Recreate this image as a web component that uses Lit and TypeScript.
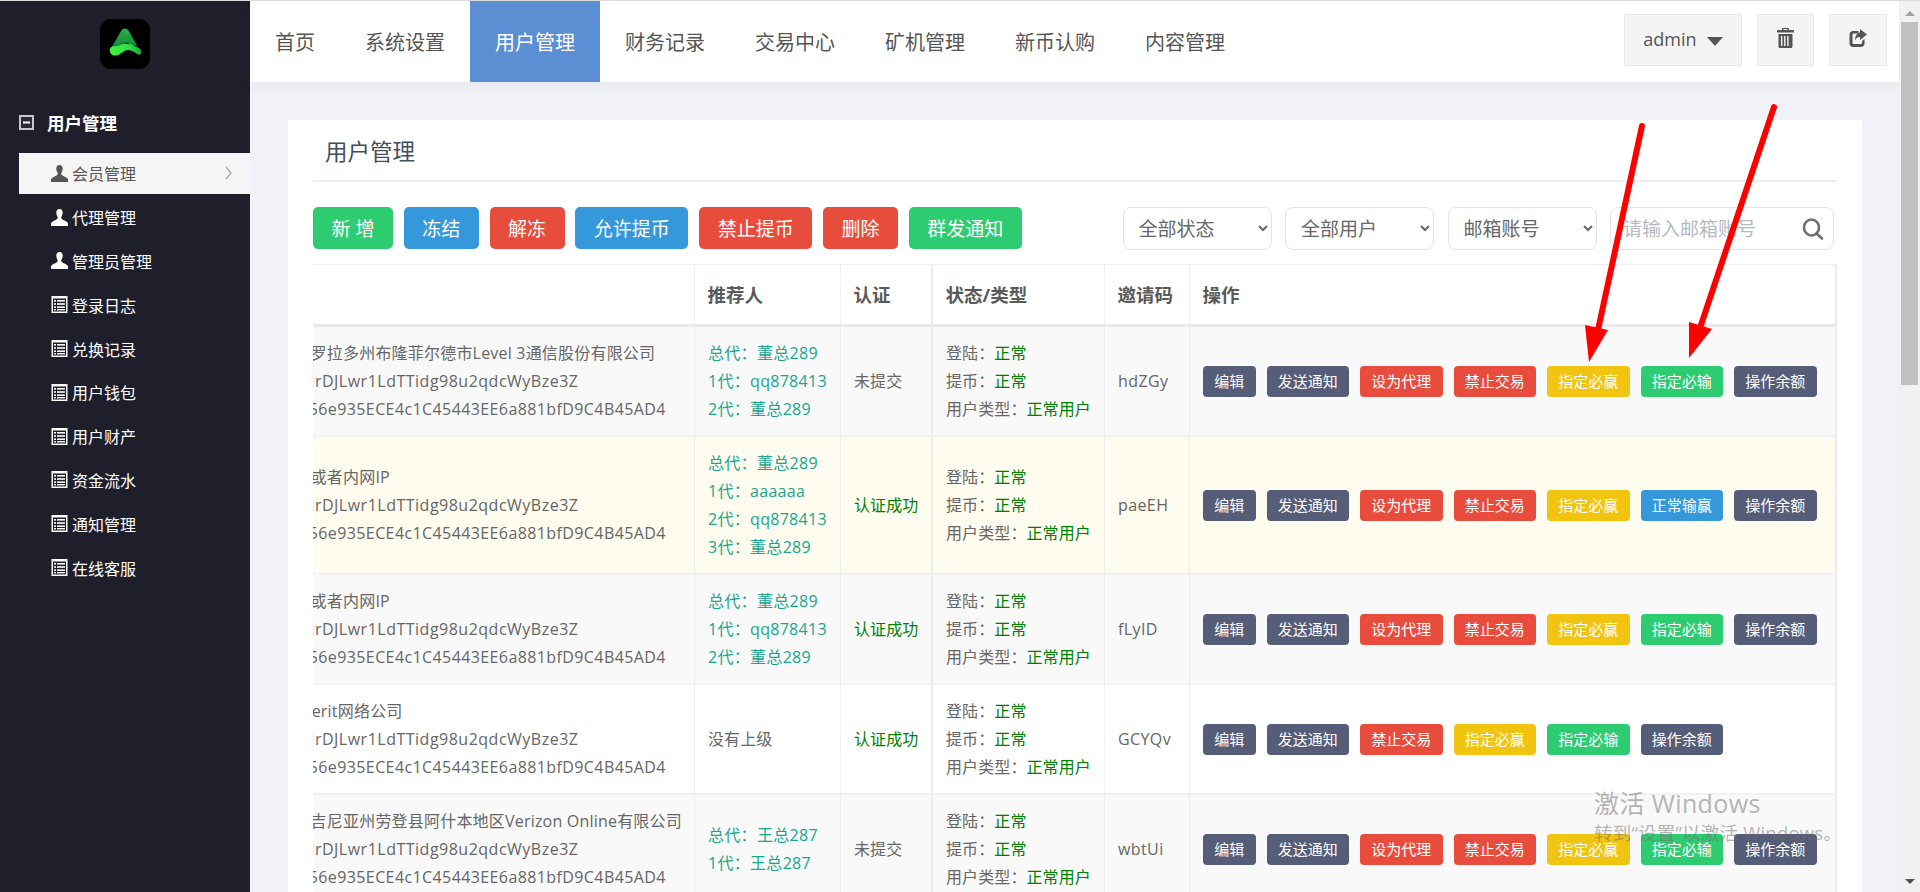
import { LitElement, html, css, svg, nothing } from "lit";
import { customElement } from "lit/decorators.js";

const FONT = css`"Open Sans", "Noto Sans CJK SC", sans-serif`;

const navItems = ["首页", "系统设置", "用户管理", "财务记录", "交易中心", "矿机管理", "新币认购", "内容管理"];
const sideItems: [string, string][] = [
  ["user", "会员管理"], ["user", "代理管理"], ["user", "管理员管理"], ["list", "登录日志"], ["list", "兑换记录"],
  ["list", "用户钱包"], ["list", "用户财产"], ["list", "资金流水"], ["list", "通知管理"], ["list", "在线客服"],
];
const toolbar: [string, string][] = [
  ["新 增", "green"], ["冻结", "blue"], ["解冻", "red"], ["允许提币", "blue"], ["禁止提币", "red"], ["删除", "red"], ["群发通知", "green"],
];

const ADDR = "TFq8MrDJLwr1LdTTidg98u2qdcWyBze3Z";
const HEX = "0x1a756e935ECE4c1C45443EE6a881bfD9C4B45AD4";
const a: [string, string] = ["编辑", "slate"];
const b: [string, string] = ["发送通知", "slate"];
const c: [string, string] = ["设为代理", "red"];
const d: [string, string] = ["禁止交易", "red"];
const e: [string, string] = ["指定必赢", "yellow"];
const f: [string, string] = ["指定必输", "green"];
const g: [string, string] = ["操作余额", "slate"];
const h: [string, string] = ["正常输赢", "blue"];

interface Row {
  loc: string; refs: string[]; auth: string; ok: boolean; code: string; tone: string; actions: [string, string][];
}
const rows: Row[] = [
  { loc: "美国科罗拉多州布隆菲尔德市Level 3通信股份有限公司", refs: ["总代：董总289", "1代：qq878413", "2代：董总289"], auth: "未提交", ok: false, code: "hdZGy", tone: "odd", actions: [a, b, c, d, e, f, g] },
  { loc: "局域网或者内网IP", refs: ["总代：董总289", "1代：aaaaaa", "2代：qq878413", "3代：董总289"], auth: "认证成功", ok: true, code: "paeEH", tone: "warm", actions: [a, b, c, d, e, h, g] },
  { loc: "局域网或者内网IP", refs: ["总代：董总289", "1代：qq878413", "2代：董总289"], auth: "认证成功", ok: true, code: "fLyID", tone: "odd", actions: [a, b, c, d, e, f, g] },
  { loc: "美国Everit网络公司", refs: [], auth: "认证成功", ok: true, code: "GCYQv", tone: "plain", actions: [a, b, d, e, f, g] },
  { loc: "美国弗吉尼亚州劳登县阿什本地区Verizon Online有限公司", refs: ["总代：王总287", "1代：王总287"], auth: "未提交", ok: false, code: "wbtUi", tone: "odd", actions: [a, b, c, d, e, f, g] },
];

const iconUser = html`<svg class="ic" width="17" height="17" viewBox="0 0 17 17" fill="currentColor"><path d="M8.5 0C6.4 0 5.3 1.5 5.3 3.6c0 1.6.5 3.2 1.3 4.3.3.4.3 1 .1 1.4-.5.9-1.6 1.5-3 2.1C2 12.1.4 13 0 14.2V17h17v-2.8c-.4-1.2-2-2.1-3.7-2.8-1.4-.6-2.5-1.2-3-2.1-.2-.4-.2-1 .1-1.4.8-1.1 1.3-2.7 1.3-4.3C11.700 1.500 10.600 0 8.500 0z"/></svg>`;
const iconList = html`<svg class="ic" width="17" height="17" viewBox="0 0 17 17"><rect x="0.500" y="0" width="16" height="17" fill="#fff"/><rect x="2" y="2.500" width="13" height="13" fill="#1f1e2b"/><rect x="3" y="4" width="2" height="1.600" fill="#fff"/><rect x="6" y="4" width="8" height="1.600" fill="#fff"/><rect x="3" y="7.200" width="2" height="1.600" fill="#fff"/><rect x="6" y="7.200" width="8" height="1.600" fill="#fff"/><rect x="3" y="10.400" width="2" height="1.600" fill="#fff"/><rect x="6" y="10.400" width="8" height="1.600" fill="#fff"/><rect x="3" y="13" width="2" height="1.400" fill="#fff"/><rect x="6" y="13" width="8" height="1.400" fill="#fff"/></svg>`;

@customElement("app-root")
export class AppRoot extends LitElement {
  static styles = css`
    :host { display: block; height: 892px; overflow: hidden; font-family: ${FONT}; color: #666; position: relative; }
    * { box-sizing: border-box; }
    .page { display: flex; height: 892px; border-top: 1px solid #dcdcdc; }

    .side { width: 250px; flex: none; background: #1f1e2b; display: flex; flex-direction: column; }
    .logo { margin: 18px auto 0; width: 50px; height: 50px; display: block; }
    .side-title { display: flex; align-items: center; margin: 33px 0 0 19px; height: 40px; gap: 13px; color: #fff; font-size: 17.500px; font-weight: 700; }
    .side-list { list-style: none; margin: 11px 0 0 19px; padding: 0; display: flex; flex-direction: column; gap: 3px; }
    .side-list li { height: 40.800px; display: flex; align-items: center; padding-left: 32px; color: #fff; font-size: 16px; }
    .side-list .ic { margin-right: 4px; flex: none; }
    .side-list li.on { background: #f5f5f5; color: #555; }
    .chev { margin-left: auto; margin-right: 18px; }

    .main { flex: 1; min-width: 0; background: #f0f2f7; display: flex; flex-direction: column; }
    .nav { height: 81px; flex: none; background: #fff; box-shadow: 0 3px 10px rgba(60, 70, 90, .07); display: flex; align-items: stretch; }
    .nav a { padding: 0 25px; font-size: 20px; color: #555; display: flex; align-items: center; }
    .nav a.on { background: #5b8ed3; color: #fff; }
    .nav-right { margin-left: auto; display: flex; align-items: center; gap: 15px; padding: 0 12px 3px 0; }
    .nav-btn { height: 52px; background: #f4f4f4; border: 1px solid #e8e8e8; display: flex; align-items: center; justify-content: center; color: #555; }
    .admin { width: 118px; font-size: 18px; gap: 10px; padding-bottom: 2px; }
    .caret { width: 0; height: 0; border-left: 8px solid transparent; border-right: 8px solid transparent; border-top: 9px solid #555; margin-top: 4px; }
    .square { width: 58px; padding-bottom: 4px; }
    .trash { width: 57px; }

    .card { margin: 38px 37px 0 38px; flex: 1; background: #fff; padding: 0 25px; min-height: 0; overflow: hidden; }
    .card-head { height: 62px; border-bottom: 2px solid #eee; display: flex; align-items: center; padding: 0 0 0 12px; font-size: 22.500px; color: #444d5c; }
    .tools { display: flex; justify-content: space-between; margin-top: 25px; height: 43px; }
    .tool-btns { display: flex; gap: 10.800px; }
    .tb { height: 42px; padding: 0 18.500px; border: none; border-radius: 5px; color: #fff; font: inherit; font-size: 19px; white-space: pre; }
    .green { background: #2ecc71; }
    .blue { background: #3498db; }
    .red { background: #e74c3c; }
    .yellow { background: #f1c40f; }
    .slate { background: #565d78; }
    .filters { display: flex; gap: 13.500px; margin-right: 3px; }
    select { width: 149px; height: 43px; border: 1px solid #e4e4e4; border-radius: 8px; background-color: #fff; color: #666; font: inherit; font-size: 19px; padding-left: 11px; }
    .search { width: 224px; height: 43px; border: 1px solid #e4e4e4; border-radius: 8px; display: flex; align-items: center; padding: 0 9px 0 12px; }
    .search input { flex: 1; min-width: 0; border: none; outline: none; background: transparent; font: inherit; font-size: 19px; padding: 0; color: #666; }
    .search input::placeholder { color: #b5bac2; }

    .scroll { margin-top: 14px; overflow: hidden; }
    table { border-collapse: separate; border-spacing: 0; table-layout: fixed; width: 1589px; margin-left: -65px; font-size: 16px; line-height: 28px; }
    th { height: 63px; padding: 0 12.500px; text-align: left; font-size: 18.500px; font-weight: 700; color: #5a5a5a; background: #fff; border-top: 1px solid #eee; border-bottom: 3px solid #eaeaea; border-left: 1px solid #eee; }
    td { padding: 12px 13px; border-bottom: 2px solid #f1f1f1; border-left: 1px solid #eee; white-space: nowrap; vertical-align: middle; color: #666; letter-spacing: .1px; }
    .c4 { border-left-width: 2px; border-left-color: #ebebeb; }
    .c6 { border-right: 2px solid #ebebeb; }
    tr.odd td { background: #f9f9f9; }
    tr.warm td { background: #fefbef; }
    tr.plain td { background: #fff; }
    .line { display: block; }
    .loc { letter-spacing: .2px; }
    .addr { letter-spacing: .5px; }
    .hex { letter-spacing: .4px; }
    .teal { color: #16a78c; letter-spacing: .3px; }
    .code { letter-spacing: .4px; }
    .ok { color: #008000; }
    .acts { display: flex; gap: 11px; }
    .ab { height: 31px; padding: 0 11.250px; border-radius: 4px; color: #fff; font-size: 15px; letter-spacing: 0; display: flex; align-items: center; }

    .scrollbar { width: 21px; flex: none; background: #f1f1f1; display: flex; flex-direction: column; align-items: center; }
    .up { width: 0; height: 0; margin-top: 10px; border-left: 5px solid transparent; border-right: 5px solid transparent; border-bottom: 5px solid #a3a3a3; }
    .thumb { width: 17px; height: 363px; margin-top: 6px; background: #c1c1c1; }
    .down { margin-top: auto; margin-bottom: 8px; width: 0; height: 0; border-left: 5px solid transparent; border-right: 5px solid transparent; border-top: 5px solid #505050; }

    .arrows { position: absolute; left: 0; top: 0; pointer-events: none; }
    .activate { position: absolute; left: 1594px; top: 786px; color: rgba(110, 110, 110, .5); pointer-events: none; white-space: nowrap; }
    .activate .l1 { font-size: 25px; line-height: 34px; letter-spacing: .4px; }
    .activate .l2 { font-size: 18.500px; line-height: 24px; margin-top: 1px; letter-spacing: .2px; }
  `;

  private cell(r: Row) {
    return html`
      <tr class=${r.tone}>
        <td>
          <span class="line loc">${r.loc}</span>
          <span class="line addr">${ADDR}</span>
          <span class="line hex">${HEX}</span>
        </td>
        <td>${r.refs.length
          ? r.refs.map((t) => html`<span class="line teal">${t}</span>`)
          : html`没有上级`}</td>
        <td class=${r.ok ? "ok" : ""}>${r.auth}</td>
        <td class="c4">
          <span class="line">登陆：<span class="ok">正常</span></span>
          <span class="line">提币：<span class="ok">正常</span></span>
          <span class="line">用户类型：<span class="ok">正常用户</span></span>
        </td>
        <td class="code">${r.code}</td>
        <td class="c6"><div class="acts">${r.actions.map(([t, k]) => html`<span class="ab ${k}">${t}</span>`)}</div></td>
      </tr>`;
  }

  render() {
    return html`
      <div class="page">
        <aside class="side">
          <svg class="logo" viewBox="0 0 50 50">
            <defs>
              <linearGradient id="lg" x1="0" y1="0" x2="1" y2="0"><stop offset="0" stop-color="#45f03c"/><stop offset=".6" stop-color="#2fe045"/><stop offset="1" stop-color="#17a83c"/></linearGradient>
              <linearGradient id="dg" x1="0" y1="0" x2="0" y2="1"><stop offset="0" stop-color="#27b34a"/><stop offset="1" stop-color="#15823a"/></linearGradient>
            </defs>
            <rect width="50" height="50" rx="11" fill="#000"/>
            <path d="M25 9.500c1.800 0 3 1 4 2.800l8.200 14.500-7-1.300-3-.1c-1.500-.8-3.300-1.200-5-.6l-5.500 3.500-5.500.6L21 12.300c1-1.800 2.200-2.800 4-2.800z" fill="url(#dg)"/>
            <path d="M10 30c1-2.500 3-2.800 5-2.600 3 .2 5.500-1.500 8-2.600 4-1.800 7.500-.5 10.500 1.400 3 1.800 6.500 2.700 7.500 5 .5 1.500.2 3.600-1 4.300-1.500.6-3-.6-4.500-1.700-3-2-6.500-3.900-10-2.200-3.500 1.500-6 5-10 5-3.500 0-6.500-2.500-5.500-6.600z" fill="url(#lg)"/>
            <path d="M23 24.400c1.500-.7 3-.8 5.500-.3l1 1.300c-2.300-.8-4.500-.9-6.500-1z" fill="#000"/>
          </svg>
          <div class="side-title">
            <svg width="15" height="15" viewBox="0 0 15 15"><rect x="1" y="1" width="13" height="13" fill="#2b2a37" stroke="#c8c8c8" stroke-width="2"/><rect x="4" y="6.500" width="7" height="2" fill="#fff"/></svg>
            用户管理
          </div>
          <ul class="side-list">
            ${sideItems.map(([ic, t], i) => html`<li class=${i === 0 ? "on" : ""}>
              ${ic === "user" ? iconUser : iconList}${t}
              ${i === 0 ? html`<svg class="chev" width="7" height="14" viewBox="0 0 7 14" fill="none"><path d="M1 1l5 6-5 6" stroke="#aaa" stroke-width="1.400"/></svg>` : nothing}
            </li>`)}
          </ul>
        </aside>

        <div class="main">
          <nav class="nav">
            ${navItems.map((t, i) => html`<a class=${i === 2 ? "on" : ""}>${t}</a>`)}
            <div class="nav-right">
              <div class="nav-btn admin">admin<span class="caret"></span></div>
              <div class="nav-btn square trash">
                <svg width="17" height="20" viewBox="0 0 17 20" fill="#555"><path d="M6 0h5c.6 0 1 .4 1 1v1h4c.6 0 1 .4 1 1v1.500H0V3c0-.6.4-1 1-1h4V1c0-.6.4-1 1-1zm.4 1v1h4.200V1z"/><path fill-rule="evenodd" d="M1.500 6h14v12.500c0 .8-.7 1.500-1.500 1.500H3c-.8 0-1.500-.7-1.500-1.500zM4 8v10h1.400V8zm3.100 0v10h1.400V8zm3.100 0v10h1.400V8z"/></svg>
              </div>
              <div class="nav-btn square">
                <svg width="18" height="18" viewBox="0 0 18 18" fill="#555"><path d="M9.500 2.500v2H5c-1 0-1.500.5-1.500 1.500v7.500c0 1 .5 1.500 1.500 1.500h6.500c1 0 1.500-.5 1.500-1.500V12l2.500-2v4.500c0 2-1.500 3.500-3.500 3.500H4c-2 0-3.500-1.500-3.500-3.500v-9C.5 3.500 2 2 4 2h5.500z"/><path d="M11 0l7 5.500-7 5.500V8c-2.500 0-4 1-5 3.500C6 7 8 4 11 3.500z"/></svg>
              </div>
            </div>
          </nav>

          <section class="card">
            <div class="card-head">用户管理</div>
            <div class="tools">
              <div class="tool-btns">${toolbar.map(([t, k]) => html`<button class="tb ${k}">${t}</button>`)}</div>
              <div class="filters">
                <select><option>全部状态</option></select>
                <select><option>全部用户</option></select>
                <select><option>邮箱账号</option></select>
                <label class="search">
                  <input placeholder="请输入邮箱账号" />
                  <svg width="22" height="22" viewBox="0 0 22 22" fill="none" stroke="#6f6f6f" stroke-width="2.600"><ellipse cx="9.500" cy="9.500" rx="7.500" ry="8"/><path d="M14.500 15.500l5.500 5" stroke-linecap="round"/></svg>
                </label>
              </div>
            </div>
            <div class="scroll">
              <table>
                <colgroup><col style="width:446px"/><col style="width:146px"/><col style="width:91px"/><col style="width:173px"/><col style="width:85px"/><col style="width:648px"/></colgroup>
                <thead><tr><th></th><th>推荐人</th><th>认证</th><th class="c4">状态/类型</th><th>邀请码</th><th class="c6">操作</th></tr></thead>
                <tbody>${rows.map((r) => this.cell(r))}</tbody>
              </table>
            </div>
          </section>
        </div>

        <div class="scrollbar"><span class="up"></span><span class="thumb"></span><span class="down"></span></div>
      </div>

      <svg class="arrows" width="1920" height="892" viewBox="0 0 1920 892">
        ${svg`<path d="M1642 126L1598 330" stroke="#f00" stroke-width="6" stroke-linecap="round"/>
        <polygon points="1585,325 1608,330 1589,362" fill="#f00"/>
        <path d="M1774 107L1700 328" stroke="#f00" stroke-width="6" stroke-linecap="round"/>
        <polygon points="1689,322 1712,329 1689,358" fill="#f00"/>`}
      </svg>
      <div class="activate">
        <div class="l1">激活 Windows</div>
        <div class="l2">转到“设置”以激活 Windows。</div>
      </div>
    `;
  }
}
